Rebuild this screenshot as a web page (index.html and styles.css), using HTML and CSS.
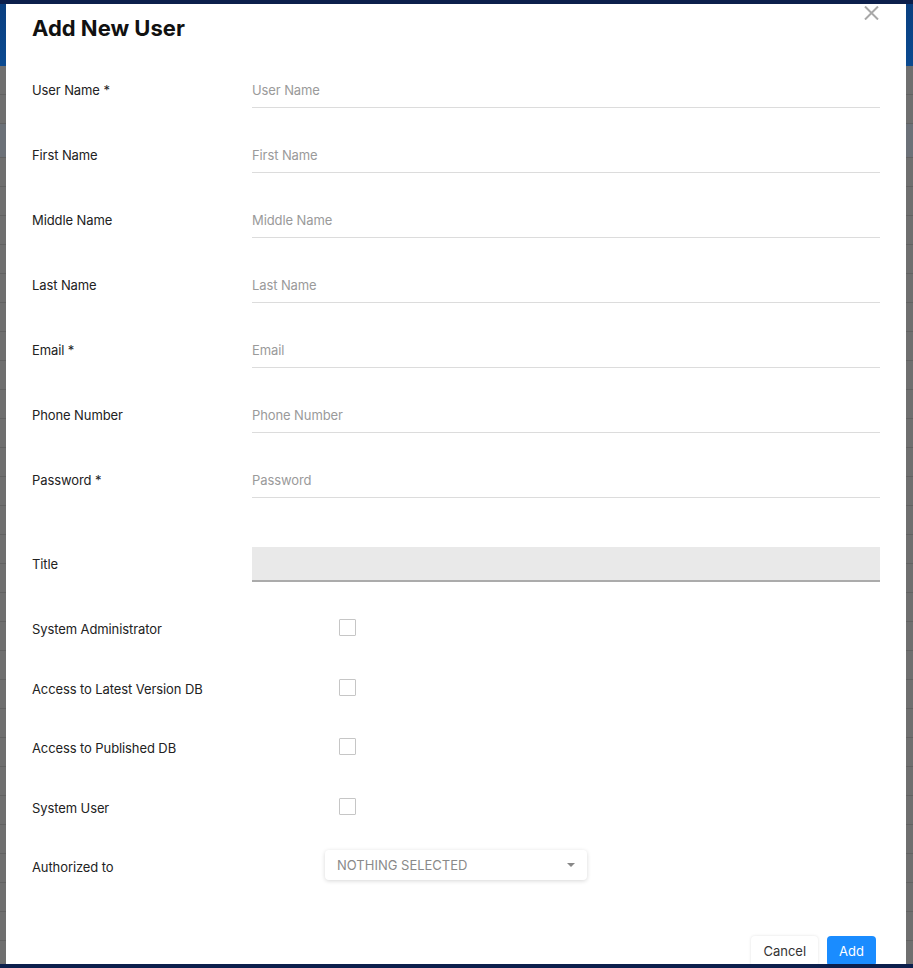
FILE: index.html
```html
<!DOCTYPE html>
<html lang="en">
<head>
  <meta charset="UTF-8">
  <meta name="viewport" content="width=device-width, initial-scale=1.0">
  <title>Add New User</title>
  <link rel="stylesheet" href="styles.css">
</head>
<body>
  <div class="page">
    <div class="topbar"></div>
    <div class="banner"></div>
    <div class="rows">
      <div class="row-bg"></div><div class="row-bg"></div><div class="row-bg tint"></div>
      <div class="row-bg"></div><div class="row-bg"></div><div class="row-bg"></div>
      <div class="row-bg"></div><div class="row-bg"></div><div class="row-bg"></div>
      <div class="row-bg"></div><div class="row-bg"></div><div class="row-bg"></div>
      <div class="row-bg"></div><div class="row-bg"></div><div class="row-bg"></div>
      <div class="row-bg"></div><div class="row-bg"></div><div class="row-bg"></div>
      <div class="row-bg"></div><div class="row-bg"></div><div class="row-bg"></div>
      <div class="row-bg"></div><div class="row-bg"></div><div class="row-bg"></div>
      <div class="row-bg"></div><div class="row-bg"></div><div class="row-bg"></div>
      <div class="row-bg"></div><div class="row-bg"></div><div class="row-bg"></div>
    </div>
  </div>

  <div class="modal">
    <button class="close" aria-label="Close">
      <svg width="15" height="14" viewBox="0 0 15 14"><path d="M1 0.5 L14 13.5 M14 0.5 L1 13.5" stroke="#a8a8a8" stroke-width="2" fill="none"/></svg>
    </button>
    <h1 class="modal-title">Add New User</h1>

    <form class="form">
      <div class="field">
        <label>User Name *</label>
        <input type="text" placeholder="User Name">
      </div>
      <div class="field">
        <label>First Name</label>
        <input type="text" placeholder="First Name">
      </div>
      <div class="field">
        <label>Middle Name</label>
        <input type="text" placeholder="Middle Name">
      </div>
      <div class="field">
        <label>Last Name</label>
        <input type="text" placeholder="Last Name">
      </div>
      <div class="field">
        <label>Email *</label>
        <input type="text" placeholder="Email">
      </div>
      <div class="field">
        <label>Phone Number</label>
        <input type="text" placeholder="Phone Number">
      </div>
      <div class="field">
        <label>Password *</label>
        <input type="password" placeholder="Password">
      </div>

      <div class="field title-field">
        <label>Title</label>
        <div class="select-box"></div>
      </div>

      <div class="option">
        <label>System Administrator</label>
        <span class="check"></span>
      </div>
      <div class="option">
        <label>Access to Latest Version DB</label>
        <span class="check"></span>
      </div>
      <div class="option">
        <label>Access to Published DB</label>
        <span class="check"></span>
      </div>
      <div class="option">
        <label>System User</label>
        <span class="check"></span>
      </div>
      <div class="option">
        <label>Authorized to</label>
        <div class="dropdown">
          <span>NOTHING SELECTED</span>
          <span class="caret"></span>
        </div>
      </div>
    </form>

    <div class="actions">
      <button class="btn btn-cancel">Cancel</button>
      <button class="btn btn-add">Add</button>
    </div>
  </div>

  <div class="bottombar"></div>
</body>
</html>
```

FILE: styles.css
```css
body {
  margin: 0;
  height: 968px;
  overflow: hidden;
  font-family: Inter, "Noto Sans", sans-serif;
  background-color: #6f6f6f;
}

.page {
  width: 913px;
}

.topbar {
  height: 4px;
  background-color: #0c1f4c;
}

.banner {
  height: 62px;
  background: linear-gradient(to bottom, #0a3f80, #0b4a90);
}

.row-bg {
  height: 28px;
  border-bottom: 1px solid #626262;
}

.row-bg.tint {
  height: 33px;
  background-color: #6c7178;
}

.bottombar {
  position: fixed;
  left: 0;
  right: 0;
  bottom: 0;
  height: 4px;
  background-color: #0c1f4c;
}

.modal {
  position: absolute;
  left: 6px;
  top: 4px;
  width: 900px;
  height: 960px;
  box-sizing: border-box;
  padding: 0 26px;
  background-color: #fff;
  overflow: hidden;
}

.close {
  position: absolute;
  top: 2px;
  right: 27px;
  padding: 0;
  border: none;
  background: none;
  cursor: pointer;
}

.modal-title {
  margin: 0;
  padding-top: 11px;
  height: 42px;
  font-size: 22px;
  line-height: 26px;
  font-weight: 700;
  color: #111;
}

.form {
  display: flex;
  flex-direction: column;
  padding-top: 0.5px;
}

.field {
  display: grid;
  grid-template-columns: 220px 1fr;
  align-items: center;
  height: 65px;
}

.field label,
.option label {
  font-size: 13px;
  letter-spacing: -0.1px;
  color: #222;
}

.field input {
  height: 35px;
  box-sizing: border-box;
  padding: 0;
  border: none;
  border-bottom: 1px solid #dcdcdc;
  font-family: inherit;
  font-size: 13px;
  letter-spacing: -0.1px;
  color: #222;
  outline: none;
}

.field input::placeholder {
  color: #9a9a9a;
}

.title-field {
  margin-top: 19px;
}

.select-box {
  height: 35px;
  box-sizing: border-box;
  background-color: #e9e9e9;
  border-bottom: 2px solid #ababab;
}

.option {
  display: grid;
  grid-template-columns: 293px auto;
  justify-content: start;
  align-items: center;
  height: 59.5px;
}

.title-field + .option {
  margin-top: 3px;
}

.check {
  width: 17px;
  height: 17px;
  box-sizing: border-box;
  margin-left: 14px;
  margin-top: -3px;
  border: 1px solid #c6c6c6;
  border-radius: 1px;
}

.dropdown {
  display: flex;
  align-items: center;
  justify-content: space-between;
  width: 262px;
  height: 30px;
  box-sizing: border-box;
  padding: 0 12px;
  margin-top: -4px;
  border-radius: 4px;
  background-color: #fff;
  box-shadow: 0 1px 4px rgba(0, 0, 0, 0.16);
  font-size: 13px;
  color: #8a8a8a;
}

.caret {
  width: 0;
  height: 0;
  border-left: 4px solid transparent;
  border-right: 4px solid transparent;
  border-top: 4px solid #888;
}

.actions {
  display: flex;
  justify-content: flex-end;
  gap: 9px;
  margin-top: 39px;
  padding-right: 4px;
}

.btn {
  height: 30px;
  padding: 0 12px;
  border: none;
  border-radius: 4px;
  font-family: inherit;
  font-size: 13px;
  cursor: pointer;
}

.btn-cancel {
  background-color: #fff;
  color: #333;
  box-shadow: 0 0 3px rgba(0, 0, 0, 0.12);
}

.btn-add {
  background-color: #1a8cff;
  color: #fff;
}
```
